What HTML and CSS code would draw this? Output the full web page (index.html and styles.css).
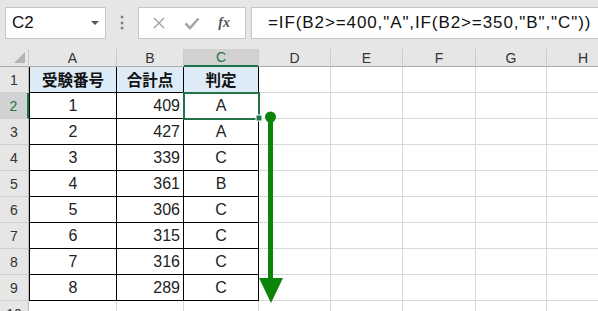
FILE: index.html
```html
<!DOCTYPE html>
<html lang="ja">
<head>
  <meta charset="UTF-8">
  <title>判定</title>
  <link rel="stylesheet" href="styles.css">
</head>
<body>

<div class="toolbar">
  <div class="namebox">
    <span>C2</span>
    <span class="caret"></span>
  </div>
  <div class="dots">⋮</div>
  <div class="fxbox">
    <svg class="icon" width="14" height="14" viewBox="0 0 14 14">
      <path d="M2 2 L12 12 M12 2 L2 12" stroke="#a0a0a0" stroke-width="1.4" fill="none"/>
    </svg>
    <svg class="icon" width="16" height="14" viewBox="0 0 16 14">
      <path d="M1.5 7.5 L6 12 L14.5 2.5" stroke="#a6a6a6" stroke-width="2.6" fill="none"/>
    </svg>
    <span class="fx">fx</span>
  </div>
  <div class="formula">=IF(B2&gt;=400,"A",IF(B2&gt;=350,"B","C"))</div>
</div>

<div class="sheet">
  <table class="grid">
    <tr class="cols">
      <th class="corner"><span class="tri"></span></th>
      <th class="w-a">A</th>
      <th class="w-b">B</th>
      <th class="w-c on">C</th>
      <th class="w-d">D</th>
      <th class="w-e">E</th>
      <th class="w-f">F</th>
      <th class="w-g">G</th>
      <th class="w-h">H</th>
    </tr>
    <tr>
      <th class="rh">1</th>
      <td class="t a head">受験番号</td>
      <td class="t head">合計点</td>
      <td class="t head">判定</td>
      <td></td><td></td><td></td><td></td><td></td>
    </tr>
    <tr>
      <th class="rh on">2</th>
      <td class="t a mid">1</td>
      <td class="t num">409</td>
      <td class="t mid sel">A</td>
      <td></td><td></td><td></td><td></td><td></td>
    </tr>
    <tr>
      <th class="rh">3</th>
      <td class="t a mid">2</td>
      <td class="t num">427</td>
      <td class="t mid">A</td>
      <td></td><td></td><td></td><td></td><td></td>
    </tr>
    <tr>
      <th class="rh">4</th>
      <td class="t a mid">3</td>
      <td class="t num">339</td>
      <td class="t mid">C</td>
      <td></td><td></td><td></td><td></td><td></td>
    </tr>
    <tr>
      <th class="rh">5</th>
      <td class="t a mid">4</td>
      <td class="t num">361</td>
      <td class="t mid">B</td>
      <td></td><td></td><td></td><td></td><td></td>
    </tr>
    <tr>
      <th class="rh">6</th>
      <td class="t a mid">5</td>
      <td class="t num">306</td>
      <td class="t mid">C</td>
      <td></td><td></td><td></td><td></td><td></td>
    </tr>
    <tr>
      <th class="rh">7</th>
      <td class="t a mid">6</td>
      <td class="t num">315</td>
      <td class="t mid">C</td>
      <td></td><td></td><td></td><td></td><td></td>
    </tr>
    <tr>
      <th class="rh">8</th>
      <td class="t a mid">7</td>
      <td class="t num">316</td>
      <td class="t mid">C</td>
      <td></td><td></td><td></td><td></td><td></td>
    </tr>
    <tr>
      <th class="rh">9</th>
      <td class="t a mid">8</td>
      <td class="t num">289</td>
      <td class="t mid">C</td>
      <td></td><td></td><td></td><td></td><td></td>
    </tr>
    <tr>
      <th class="rh">10</th>
      <td></td><td></td><td></td><td></td><td></td><td></td><td></td><td></td>
    </tr>
  </table>

  <svg class="overlay" width="598" height="311" viewBox="0 0 598 311">
    <rect x="256" y="115" width="6" height="6" fill="#217346" stroke="#fff" stroke-width="1"/>
    <rect x="268" y="117" width="5" height="163" fill="#0a850a"/>
    <circle cx="270.5" cy="117" r="5.5" fill="#0a850a"/>
    <polygon points="259,278 283,278 271,303" fill="#0a850a"/>
  </svg>
</div>

</body>
</html>
```

FILE: styles.css
```css
body {
  margin: 0;
  background: #fff;
  font-family: "Liberation Sans", Arial, "Noto Sans CJK JP", sans-serif;
  color: #222;
  overflow: hidden;
}
.toolbar {
  display: flex;
  align-items: flex-start;
  height: 49px;
  padding-top: 7px;
  box-sizing: border-box;
  background: #e6e6e6;
}
.namebox {
  display: flex;
  align-items: center;
  justify-content: space-between;
  box-sizing: border-box;
  width: 101px;
  height: 32px;
  margin-left: 5px;
  padding: 0 6px 0 6px;
  background: #fff;
  border: 1px solid #c6c6c6;
  font-size: 17px;
  color: #111;
}
.caret {
  width: 0;
  height: 0;
  border-left: 4px solid transparent;
  border-right: 4px solid transparent;
  border-top: 4px solid #555;
}
.dots {
  width: 32px;
  text-align: center;
  font-size: 16px;
  line-height: 32px;
  color: #777;
  font-weight: bold;
}
.fxbox {
  display: flex;
  align-items: center;
  justify-content: space-around;
  box-sizing: border-box;
  width: 108px;
  height: 32px;
  padding: 0 6px 0 4px;
  background: #fff;
  border: 1px solid #c6c6c6;
}
.icon {
  display: block;
}
.fx {
  font-family: "Liberation Serif", "Times New Roman", serif;
  font-style: italic;
  font-weight: bold;
  font-size: 14px;
  color: #555;
}
.formula {
  flex: 1;
  box-sizing: border-box;
  height: 32px;
  margin-left: 5px;
  padding-left: 16px;
  background: #fff;
  border: 1px solid #c6c6c6;
  border-right: none;
  font-size: 17px;
  line-height: 30px;
  letter-spacing: 0.9px;
  color: #111;
  white-space: nowrap;
}

.sheet {
  position: relative;
}
.grid {
  border-spacing: 0;
  table-layout: fixed;
  width: 620px;
}
.grid th, .grid td {
  box-sizing: border-box;
  padding: 0;
  height: 26px;
  border-right: 1px solid #d9d9d9;
  border-bottom: 1px solid #d9d9d9;
  font-size: 16px;
  line-height: 1;
  white-space: nowrap;
  overflow: hidden;
}
.cols th {
  height: 18px;
  background: #e6e6e6;
  border-right: 1px solid #cbcbcb;
  border-bottom: 1px solid #ababab;
  font-weight: normal;
  font-size: 14px;
  color: #333;
  vertical-align: middle;
}
.cols th.on {
  background: #d2d2d2;
  color: #217346;
  border-bottom: 2px solid #217346;
}
.corner {
  width: 29px;
  position: relative;
}
.tri {
  position: absolute;
  right: 3px;
  bottom: 3px;
  width: 0;
  height: 0;
  border-left: 11px solid transparent;
  border-bottom: 11px solid #b4b4b4;
}
.w-a { width: 88px; }
.w-b { width: 67px; }
.w-c { width: 75px; }
.w-d { width: 72px; }
.w-e { width: 72px; }
.w-f { width: 73px; }
.w-g { width: 71px; }
.w-h { width: 73px; }

.grid th.rh {
  background: #e6e6e6;
  border-right: 1px solid #bababa;
  border-bottom: 1px solid #cfcfcf;
  font-weight: normal;
  font-size: 14px;
  color: #333;
  text-align: center;
}
.grid th.rh.on {
  background: #d2d2d2;
  color: #217346;
  border-right: 2px solid #217346;
}

.grid td.t {
  border-right: 1px solid #000;
  border-bottom: 1px solid #000;
}
.grid td.a {
  border-left: 1px solid #000;
}
.grid td.head {
  background: #ddebf7;
  font-family: "Noto Sans CJK JP", sans-serif;
  font-weight: bold;
  font-size: 15.5px;
  text-align: center;
  color: #111;
}
.mid {
  text-align: center;
}
.num {
  text-align: right;
  padding-right: 3px !important;
}
.sel {
  outline: 2px solid #217346;
  outline-offset: -1px;
}

.overlay {
  position: absolute;
  left: 0;
  top: -49px;
  pointer-events: none;
}
```
